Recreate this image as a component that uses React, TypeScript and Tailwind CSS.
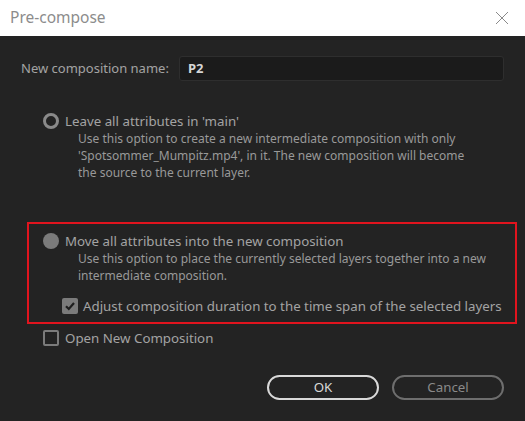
import React from "react";

const font = { fontFamily: "'Noto Sans', 'Liberation Sans', sans-serif" };

const Radio = ({ checked }: { checked?: boolean }) =>
  checked ? (
    <span className="inline-block size-[16px] shrink-0 rounded-full bg-[#7b7b7b]" />
  ) : (
    <span className="inline-block size-[16px] shrink-0 rounded-full border-[3px] border-[#8a8a8a]" />
  );

const Checkbox = ({ checked }: { checked?: boolean }) =>
  checked ? (
    <span className="flex size-[16px] shrink-0 items-center justify-center rounded-[2px] bg-[#7b7b7b]">
      <svg width="12" height="12" viewBox="0 0 12 12">
        <path d="M2 6.2 L4.8 9 L10 3" fill="none" stroke="#1e1e1e" strokeWidth="2.2" />
      </svg>
    </span>
  ) : (
    <span className="inline-block size-[16px] shrink-0 rounded-[2px] border-2 border-[#7b7b7b]" />
  );

export default function App() {
  return (
    <div className="flex h-[421px] w-[525px] flex-col bg-[#232323]" style={font}>
      <div className="flex h-[36px] items-center justify-between bg-white pl-[10px] pr-[16px]">
        <span className="text-[15.5px] text-[#8c8c8c]">Pre-compose</span>
        <svg width="14" height="14" viewBox="0 0 14 14">
          <path d="M1 1 L13 13 M13 1 L1 13" stroke="#8a8a8a" strokeWidth="1" />
        </svg>
      </div>

      <div className="flex flex-col">
        <div className="mt-[20px] flex items-center pl-[21px] pr-[21px]">
          <span className="w-[158px] text-[13px] text-[#a3a3a3]">New composition name:</span>
          <div className="flex h-[25px] flex-1 items-center rounded-[3px] border border-[#2e2e2e] bg-[#1b1b1b] pl-[8px] text-[13px] font-bold text-[#d6d6d6]">
            P2
          </div>
        </div>

        <div className="mt-[31px] pl-[43px]">
          <div className="flex items-center gap-[6px] text-[13.3px] leading-[18px] text-[#a3a3a3]">
            <Radio />
            <span>Leave all attributes in 'main'</span>
          </div>
          <p className="pl-[35px] pr-[40px] text-[12px] leading-[17px] text-[#999999]">
            Use this option to create a new intermediate composition with only 'Spotsommer_Mumpitz.mp4', in it. The new
            composition will become the source to the current layer.
          </p>
        </div>

        <div className="ml-[27px] mt-[41px] h-[102px] w-[490px] border-2 border-[#e1141e] pl-[14px] pt-[8px]">
          <div className="flex items-center gap-[6px] text-[13.3px] leading-[18px] text-[#a3a3a3]">
            <Radio checked />
            <span>Move all attributes into the new composition</span>
          </div>
          <p className="pl-[35px] pr-[20px] text-[12px] leading-[17px] text-[#999999]">
            Use this option to place the currently selected layers together into a new intermediate composition.
          </p>
          <div className="ml-[19px] mt-[13px] flex items-center gap-[5px] text-[13.3px] leading-[18px] text-[#a3a3a3]">
            <Checkbox checked />
            <span>Adjust composition duration to the time span of the selected layers</span>
          </div>
        </div>

        <div className="ml-[43px] mt-[5px] flex items-center gap-[6px] text-[13.3px] leading-[18px] text-[#a3a3a3]">
          <Checkbox />
          <span>Open New Composition</span>
        </div>

        <div className="mt-[28px] flex justify-end gap-[13px] pr-[21px]">
          <button className="flex h-[25px] w-[112px] items-center justify-center rounded-full border-2 border-[#d9d9d9] text-[13.3px] text-[#d9d9d9]">
            OK
          </button>
          <button className="flex h-[25px] w-[112px] items-center justify-center rounded-full border-2 border-[#6e6e6e] text-[13.3px] text-[#8a8a8a]">
            Cancel
          </button>
        </div>
      </div>
    </div>
  );
}
